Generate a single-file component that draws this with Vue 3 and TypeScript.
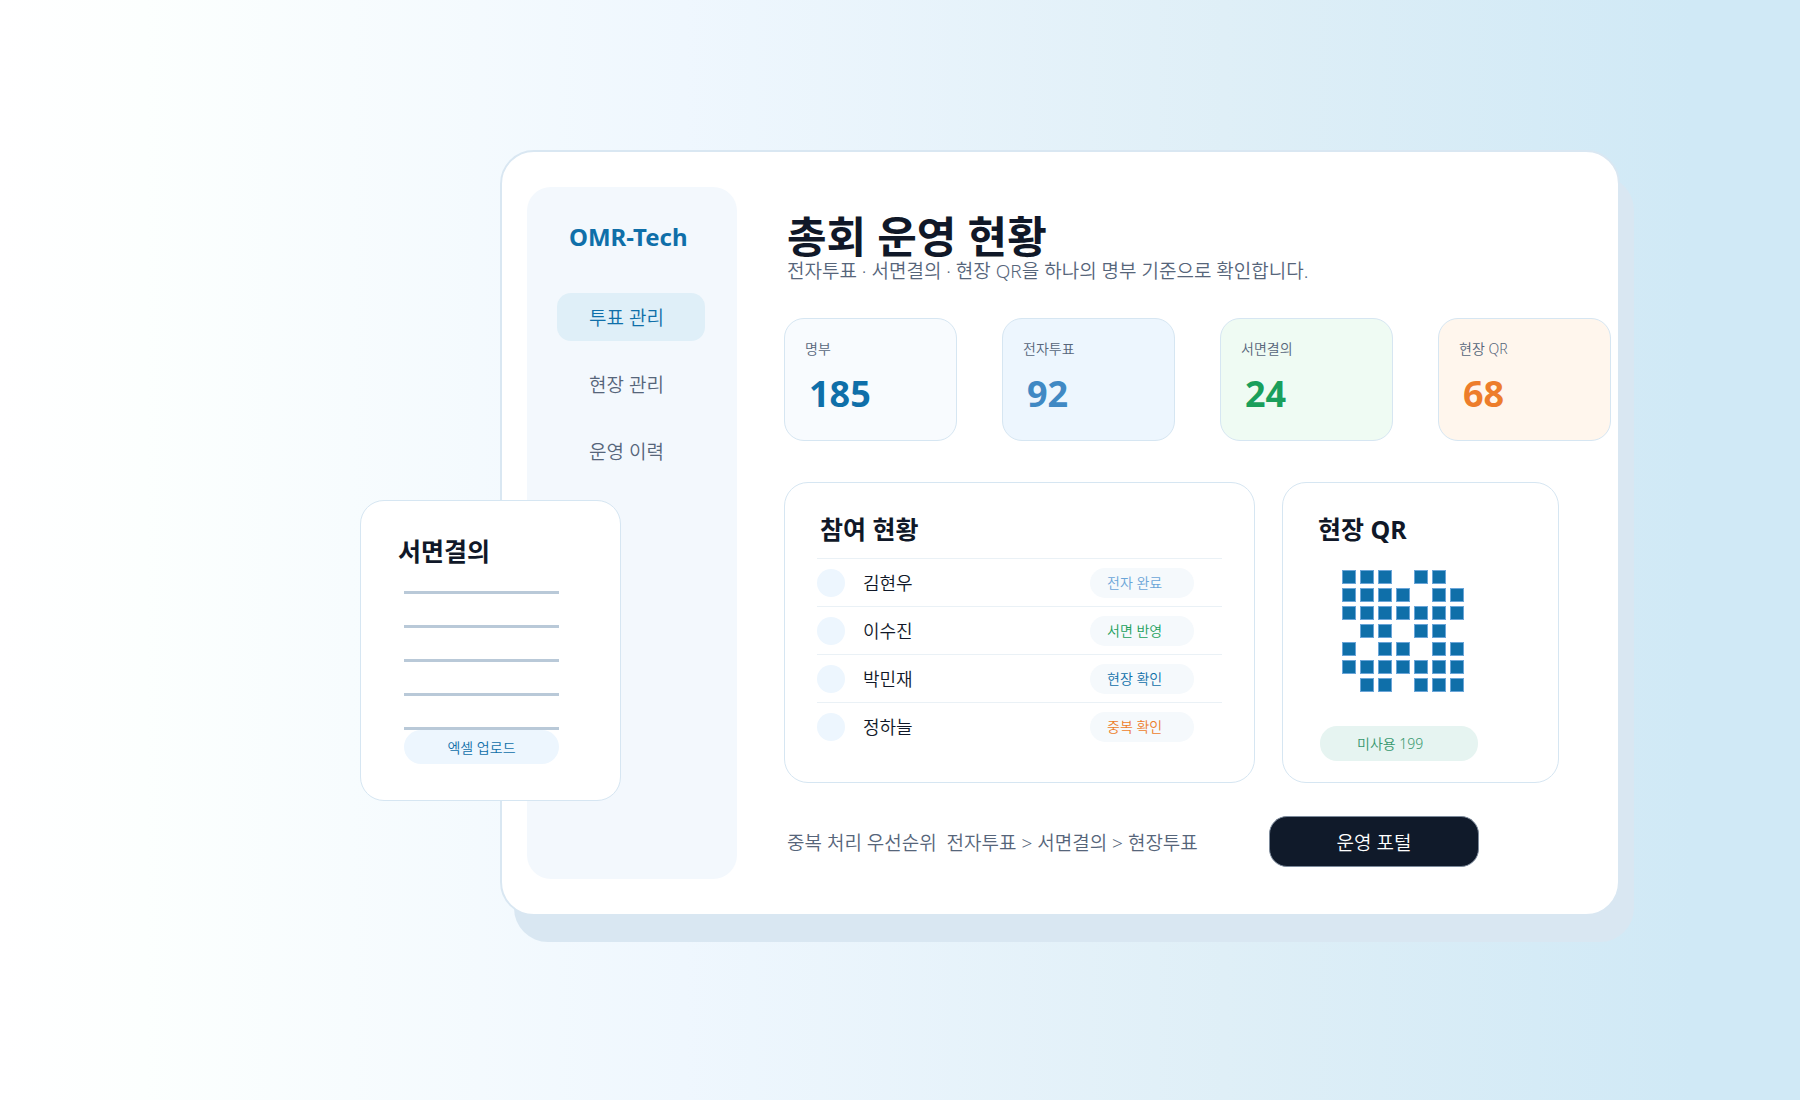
<script setup lang="ts">
interface Stat {
  label: string
  value: number
  tone: string
}

interface Participant {
  name: string
  status: string
  tone: string
}

const menu: string[] = ['투표 관리', '현장 관리', '운영 이력']

const stats: Stat[] = [
  { label: '명부', value: 185, tone: 'roster' },
  { label: '전자투표', value: 92, tone: 'online' },
  { label: '서면결의', value: 24, tone: 'paper' },
  { label: '현장 QR', value: 68, tone: 'onsite' },
]

const participants: Participant[] = [
  { name: '김현우', status: '전자 완료', tone: 'sky' },
  { name: '이수진', status: '서면 반영', tone: 'green' },
  { name: '박민재', status: '현장 확인', tone: 'blue' },
  { name: '정하늘', status: '중복 확인', tone: 'orange' },
]

const qrRows: string[] = [
  '1110110',
  '1111011',
  '1111111',
  '0110110',
  '1011011',
  '1111111',
  '0110111',
]
const qrCells: boolean[] = qrRows.join('').split('').map((c) => c === '1')
const paperLines = 5
const priorityText = '중복 처리 우선순위  전자투표 > 서면결의 > 현장투표'
</script>

<template>
  <div class="page">
    <main class="window">
      <aside class="sidebar">
        <div class="brand">OMR-Tech</div>
        <nav class="menu">
          <a
            v-for="(item, i) in menu"
            :key="item"
            href="#"
            class="menu-item"
            :class="{ active: i === 0 }"
          >{{ item }}</a>
        </nav>
      </aside>

      <section class="content">
        <h1 class="title">총회 운영 현황</h1>
        <p class="subtitle">전자투표 · 서면결의 · 현장 QR을 하나의 명부 기준으로 확인합니다.</p>

        <div class="stats">
          <div v-for="s in stats" :key="s.label" class="stat" :class="s.tone">
            <div class="stat-label">{{ s.label }}</div>
            <div class="stat-value">{{ s.value }}</div>
          </div>
        </div>

        <div class="panels">
          <section class="panel people">
            <h2 class="heading">참여 현황</h2>
            <table class="table">
              <tbody>
                <tr v-for="p in participants" :key="p.name">
                  <td class="cell-avatar"><span class="avatar"></span></td>
                  <td class="cell-name">{{ p.name }}</td>
                  <td class="cell-status"><span class="tag" :class="p.tone">{{ p.status }}</span></td>
                </tr>
              </tbody>
            </table>
          </section>

          <section class="panel qr">
            <h2 class="heading">현장 QR</h2>
            <div class="qr-grid">
              <span v-for="(on, i) in qrCells" :key="i" class="qr-cell" :class="{ on }"></span>
            </div>
            <div class="unused">미사용 199</div>
          </section>
        </div>

        <footer class="footer">
          <p class="priority">{{ priorityText }}</p>
          <button type="button" class="portal">운영 포털</button>
        </footer>
      </section>
    </main>

    <section class="paper-card">
      <h2 class="heading">서면결의</h2>
      <div class="lines">
        <span v-for="n in paperLines" :key="n" class="line"></span>
      </div>
      <button type="button" class="upload">엑셀 업로드</button>
    </section>
  </div>
</template>

<style>
body {
  margin: 0;
}
</style>

<style scoped>
.page {
  position: relative;
  box-sizing: border-box;
  min-height: 100vh;
  padding: 150px 180px 160px 500px;
  background: linear-gradient(90deg, #ffffff 0%, #fcfffe 8%, #eff7fe 38%, #dfeff7 68%, #d0e9f6 94%);
  color: #101828;
  font-family: 'Noto Sans', 'Noto Sans CJK KR', sans-serif;
  font-size: 18px;
  font-weight: 350;
}

.window {
  display: flex;
  box-sizing: border-box;
  padding: 35px 7px 35px 25px;
  border: 2px solid #d9e7f2;
  border-radius: 34px;
  background: #fff;
  box-shadow: 14px 26px 0 #d9e7f2;
}

.sidebar {
  flex: none;
  box-sizing: border-box;
  width: 210px;
  padding: 34px 30px;
  border-radius: 24px;
  background: #f3f8fd;
}

.brand {
  padding-left: 12px;
  color: #0f6fa9;
  font-size: 24px;
  font-weight: 700;
  line-height: 32px;
}

.menu {
  display: flex;
  flex-direction: column;
  gap: 19px;
  margin-top: 40px;
}

.menu-item {
  width: 148px;
  box-sizing: border-box;
  padding: 2px 0 0 32px;
  border-radius: 14px;
  color: #56657a;
  font-size: 19px;
  line-height: 46px;
  text-decoration: none;
}

.menu-item.active {
  background: #dfeff8;
  color: #0f6fa9;
}

.content {
  flex: 1;
  min-width: 0;
  padding: 28px 0 12px 47px;
}

.title {
  margin: 0 0 0 3px;
  font-size: 43px;
  font-weight: 700;
  line-height: 44px;
}

.subtitle {
  margin: 2px 0 0 3px;
  color: #56657a;
  font-size: 19px;
  line-height: 20px;
}

.stats {
  display: grid;
  grid-template-columns: repeat(4, 1fr);
  gap: 45px;
  margin-top: 37px;
}

.stat {
  box-sizing: border-box;
  height: 123px;
  padding: 20px;
  border: 1px solid #d6e6f2;
  border-radius: 20px;
}

.stat-label {
  color: #56657a;
  font-size: 14px;
  line-height: 20px;
}

.stat-value {
  margin: 13px 0 0 4px;
  font-size: 36px;
  font-weight: 700;
  line-height: 44px;
}

.roster {
  background: #f8fbfe;
  color: #0f6fa9;
}

.online {
  background: #edf6fe;
  color: #4089c4;
}

.paper {
  background: #effbf3;
  color: #1a9f5b;
}

.onsite {
  background: #fff6ed;
  color: #ed7d2b;
}

.panels {
  display: flex;
  gap: 27px;
  margin-top: 41px;
  padding-right: 52px;
}

.panel {
  box-sizing: border-box;
  height: 301px;
  padding-top: 30px;
  border: 1px solid #d6e6f2;
  border-radius: 24px;
}

.people {
  flex: 1;
  padding-right: 32px;
  padding-left: 32px;
}

.qr {
  width: 277px;
  padding-left: 37px;
}

.heading {
  margin: 0;
  font-size: 25px;
  font-weight: 700;
  line-height: 32px;
}

.people .heading {
  padding-left: 3px;
}

.qr .heading {
  margin-left: -2px;
}

.table {
  width: 100%;
  margin-top: 13px;
  border-spacing: 0;
}

.table td {
  height: 47px;
  padding: 0;
  border-top: 1px solid #eaf1f6;
}

.cell-avatar {
  width: 46px;
}

.cell-name {
  line-height: 24px;
}

.avatar {
  display: block;
  width: 28px;
  height: 28px;
  border-radius: 50%;
  background: #edf6fe;
}

.cell-status {
  width: 132px;
}

.tag {
  display: block;
  box-sizing: border-box;
  width: 104px;
  padding-left: 17px;
  border-radius: 15px;
  background: #f5f9fc;
  font-size: 14px;
  line-height: 30px;
}

.sky {
  color: #6aa5d8;
}

.green {
  color: #1a9f5b;
}

.blue {
  color: #0f6fa9;
}

.orange {
  color: #ed7d2b;
}

.qr-grid {
  display: grid;
  grid-template-columns: repeat(7, 14px);
  gap: 4px;
  margin: 25px 0 0 22px;
}

.qr-cell {
  box-sizing: border-box;
  height: 14px;
}

.qr-cell.on {
  border: 1px solid #6aa5d8;
  background: #0f6fa9;
}

.unused {
  box-sizing: border-box;
  width: 158px;
  margin-top: 34px;
  padding-left: 37px;
  border-radius: 17px;
  background: #e6f4f1;
  color: #35976d;
  font-size: 14px;
  line-height: 35px;
}

.footer {
  display: flex;
  align-items: center;
  justify-content: space-between;
  margin-top: 33px;
  padding-right: 132px;
}

.priority {
  margin: 0 0 0 3px;
  color: #56657a;
  font-size: 19px;
  white-space: pre;
}

.portal {
  width: 210px;
  height: 51px;
  padding: 0;
  border: 1px solid #7c8a9b;
  border-radius: 18px;
  background: #101a2a;
  color: #fff;
  font: inherit;
  font-size: 19px;
}

.paper-card {
  position: absolute;
  top: 500px;
  left: 360px;
  box-sizing: border-box;
  width: 261px;
  height: 301px;
  padding: 34px 61px 0 43px;
  border: 1px solid #d6e6f2;
  border-radius: 24px;
  background: #fff;
}

.paper-card .heading {
  margin-left: -6px;
}

.lines {
  display: flex;
  flex-direction: column;
  gap: 31px;
  margin-top: 24px;
}

.line {
  height: 3px;
  background: #b9c9d8;
}

.upload {
  display: block;
  width: 100%;
  height: 34px;
  padding: 0;
  border: 0;
  border-radius: 17px;
  background: #edf6fe;
  color: #0f6fa9;
  font: inherit;
  font-size: 14px;
}
</style>
